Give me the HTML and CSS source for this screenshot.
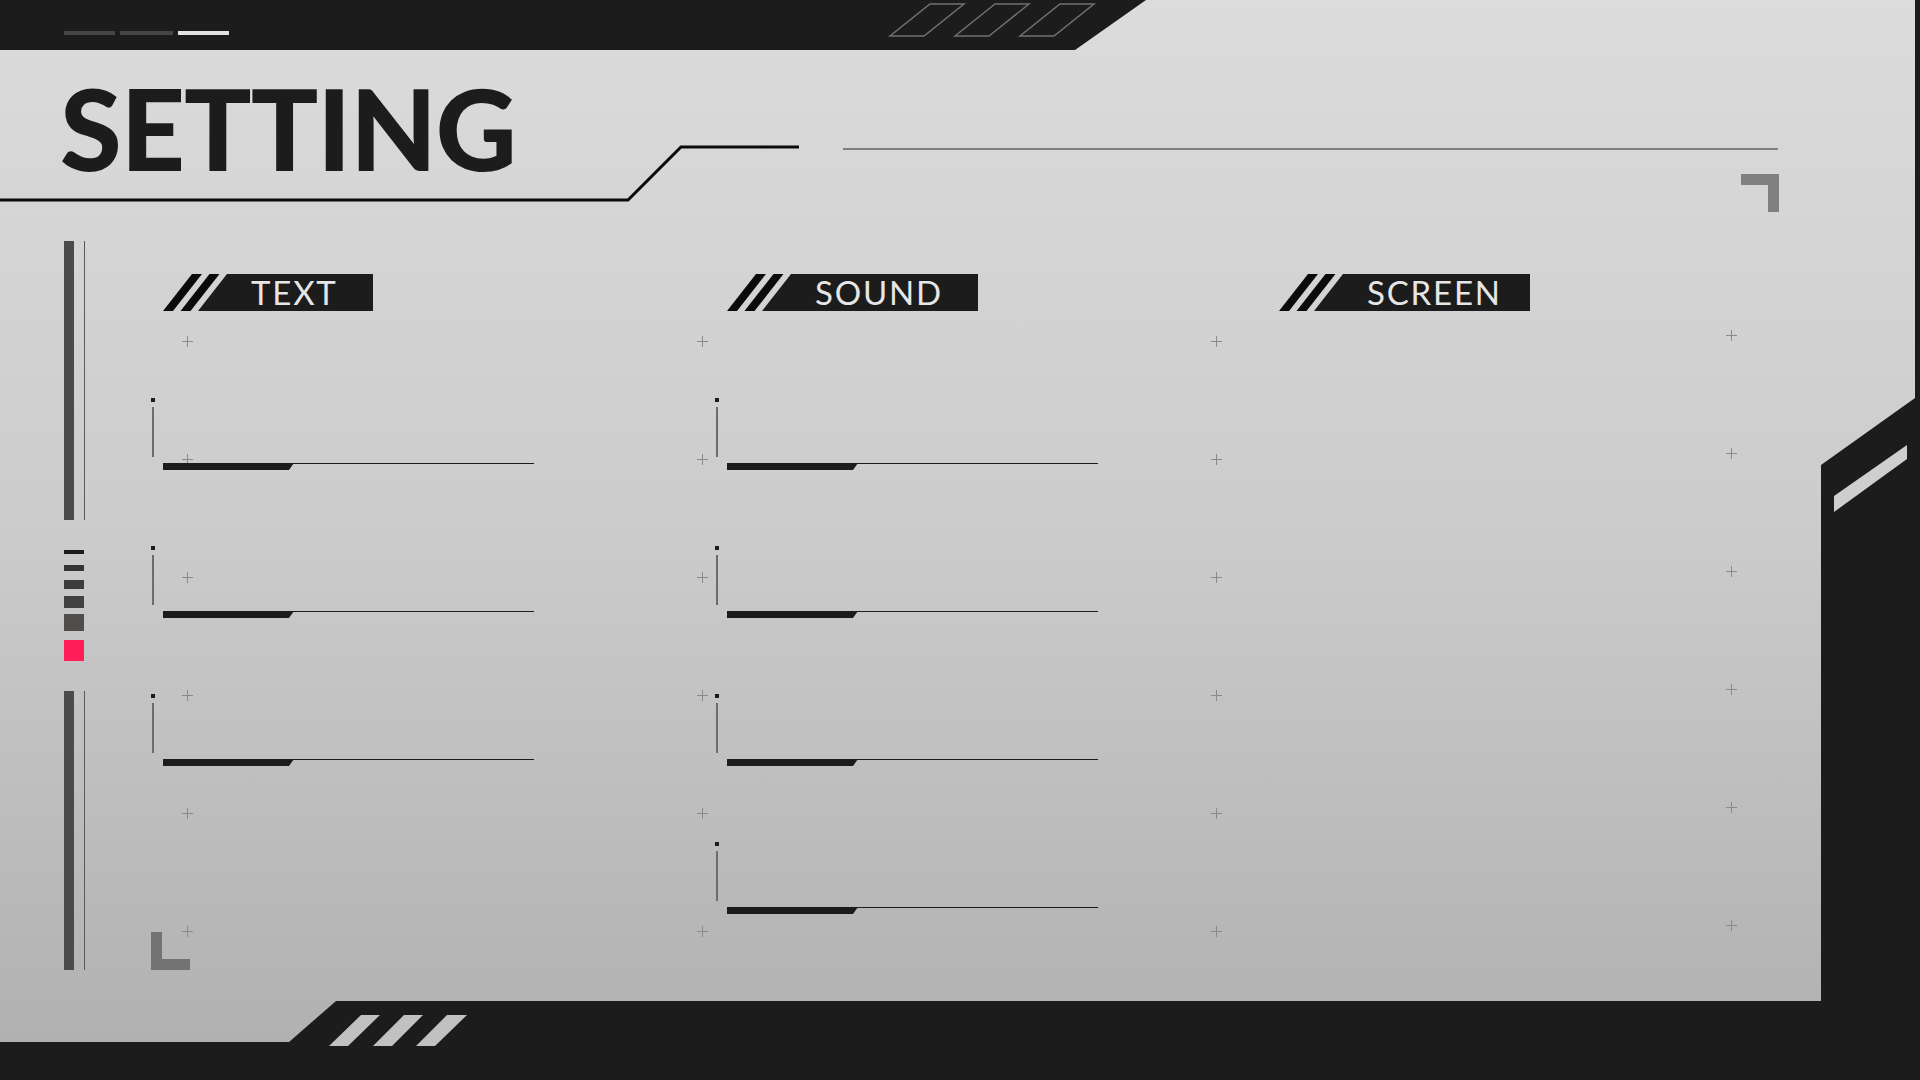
FILE: index.html
```html
<!DOCTYPE html>
<html lang="en">
<head>
<meta charset="utf-8">
<title>Setting</title>
<link rel="stylesheet" href="styles.css">
</head>
<body>
<div class="screen">
  <svg class="frame" width="1920" height="1080" viewBox="0 0 1920 1080" aria-hidden="true">
    <defs>
      <linearGradient id="panelGrad" x1="0" y1="0" x2="0" y2="1">
        <stop offset="0" stop-color="#dddcdd"/>
        <stop offset="0.5" stop-color="#cdcccd"/>
        <stop offset="1" stop-color="#b1b1b1"/>
      </linearGradient>
    </defs>
    <rect width="1920" height="1080" fill="#1c1c1c"/>
    <polygon points="0,50 1075,50 1146,0 1915,0 1915,398 1821,465 1821,1001 336,1001 289,1042 0,1042" fill="url(#panelGrad)"/>
    <g fill="none" stroke="#707070" stroke-width="1.5">
      <polygon points="930,4 964,4 924,36 890,36"/>
      <polygon points="995,4 1029,4 989,36 955,36"/>
      <polygon points="1060,4 1094,4 1054,36 1020,36"/>
    </g>
    <polyline points="0,200 628,200 681,147 799,147" fill="none" stroke="#0b0b0b" stroke-width="3"/>
    <line x1="843" y1="149" x2="1778" y2="149" stroke="#808080" stroke-width="2"/>
    <path d="M1741 174H1779V212H1768V185H1741Z" fill="#808080"/>
    <path d="M151 932H162V959H190V970H151Z" fill="#737373"/>
    <g fill="#c1c1c1">
      <polygon points="329,1046 348,1046 380,1015 361,1015"/>
      <polygon points="373,1046 392,1046 423,1015 404,1015"/>
      <polygon points="416,1046 435,1046 467,1015 447,1015"/>
    </g>
    <polygon points="1834,496 1907,445 1907,459 1834,512" fill="#cfcecf"/>
  </svg>

  <div class="content">
    <div class="topbar">
      <span class="dash dash-a"></span>
      <span class="dash dash-b"></span>
      <span class="dash dash-c"></span>
    </div>

    <header class="header">
      <h1 class="title">SETTING</h1>
    </header>

    <main class="main">
      <aside class="sidebar">
        <div class="vbar"><span class="vbar-thick"></span><span class="vbar-thin"></span></div>
        <div class="stack">
          <span class="step step-1"></span>
          <span class="step step-2"></span>
          <span class="step step-3"></span>
          <span class="step step-4"></span>
          <span class="step step-5"></span>
          <span class="step step-6"></span>
        </div>
        <div class="vbar"><span class="vbar-thick"></span><span class="vbar-thin"></span></div>
      </aside>

      <section class="stage">
        <div class="plus-grid">
          <span class="plus"></span><span class="plus"></span><span class="plus"></span><span class="plus"></span>
          <span class="plus"></span><span class="plus"></span><span class="plus"></span><span class="plus"></span>
          <span class="plus"></span><span class="plus"></span><span class="plus"></span><span class="plus"></span>
          <span class="plus"></span><span class="plus"></span><span class="plus"></span><span class="plus"></span>
          <span class="plus"></span><span class="plus"></span><span class="plus"></span><span class="plus"></span>
          <span class="plus"></span><span class="plus"></span><span class="plus"></span><span class="plus"></span>
        </div>

        <div class="columns">
          <div class="col">
            <div class="tag tag-narrow">
              <svg class="tag-art" viewBox="0 0 210 37" preserveAspectRatio="none" aria-hidden="true">
                <polygon points="0,37 10,37 39,0 29,0" fill="#0b0b0b"/>
                <polygon points="17.5,37 27.5,37 56.5,0 46.5,0" fill="#0b0b0b"/>
                <polygon points="35,37 64,0 210,0 210,37" fill="#1c1c1c"/>
              </svg>
              <span class="tag-label">TEXT</span>
            </div>
            <div class="sliders">
              <div class="slider"><div class="mark"><span class="dot"></span><span class="mline"></span></div><div class="track"><span class="fill"></span></div></div>
              <div class="slider"><div class="mark"><span class="dot"></span><span class="mline"></span></div><div class="track"><span class="fill"></span></div></div>
              <div class="slider"><div class="mark"><span class="dot"></span><span class="mline"></span></div><div class="track"><span class="fill"></span></div></div>
            </div>
          </div>

          <div class="col">
            <div class="tag">
              <svg class="tag-art" viewBox="0 0 251 37" preserveAspectRatio="none" aria-hidden="true">
                <polygon points="0,37 10,37 39,0 29,0" fill="#0b0b0b"/>
                <polygon points="17.5,37 27.5,37 56.5,0 46.5,0" fill="#0b0b0b"/>
                <polygon points="35,37 64,0 251,0 251,37" fill="#1c1c1c"/>
              </svg>
              <span class="tag-label">SOUND</span>
            </div>
            <div class="sliders">
              <div class="slider"><div class="mark"><span class="dot"></span><span class="mline"></span></div><div class="track"><span class="fill"></span></div></div>
              <div class="slider"><div class="mark"><span class="dot"></span><span class="mline"></span></div><div class="track"><span class="fill"></span></div></div>
              <div class="slider"><div class="mark"><span class="dot"></span><span class="mline"></span></div><div class="track"><span class="fill"></span></div></div>
              <div class="slider"><div class="mark"><span class="dot"></span><span class="mline"></span></div><div class="track"><span class="fill"></span></div></div>
            </div>
          </div>

          <div class="col">
            <div class="tag">
              <svg class="tag-art" viewBox="0 0 251 37" preserveAspectRatio="none" aria-hidden="true">
                <polygon points="0,37 10,37 39,0 29,0" fill="#0b0b0b"/>
                <polygon points="17.5,37 27.5,37 56.5,0 46.5,0" fill="#0b0b0b"/>
                <polygon points="35,37 64,0 251,0 251,37" fill="#1c1c1c"/>
              </svg>
              <span class="tag-label">SCREEN</span>
            </div>
          </div>
        </div>
      </section>
    </main>
  </div>
</div>
</body>
</html>
```

FILE: styles.css
```css
* { box-sizing: border-box; }

html, body {
  margin: 0;
  padding: 0;
  background: #1c1c1c;
}

.screen {
  position: relative;
  width: 1920px;
  height: 1080px;
  overflow: hidden;
  font-family: "Lato", "Open Sans", sans-serif;
}

.frame {
  position: absolute;
  left: 0;
  top: 0;
  z-index: 0;
  display: block;
}

.content {
  position: relative;
  z-index: 1;
  height: 1080px;
}

/* top bar */
.topbar {
  height: 50px;
  padding: 31px 0 0 64px;
  display: flex;
  align-items: flex-start;
  gap: 5px;
}
.dash { display: block; height: 4px; }
.dash-a { width: 51px; background: #454545; }
.dash-b { width: 53px; background: #454545; }
.dash-c { width: 51px; background: #e2e2e2; }

/* header */
.header {
  height: 150px;
  padding: 22px 0 0 60px;
}
.title {
  margin: 0;
  font-family: "Lato", sans-serif;
  font-weight: 900;
  font-size: 112px;
  line-height: 1;
  color: #1c1c1c;
  letter-spacing: -1px;
}

/* main */
.main {
  display: flex;
  padding: 41px 0 0 64px;
}

.sidebar {
  width: 21px;
  display: flex;
  flex-direction: column;
}
.vbar {
  height: 279px;
  display: flex;
  justify-content: space-between;
}
.vbar-thick { width: 10px; background: #4d4b4a; }
.vbar-thin { width: 1px; background: #5a5a5a; }

.stack {
  width: 20px;
  margin: 30px 0;
  display: flex;
  flex-direction: column;
}
.step { display: block; width: 20px; }
.step-1 { height: 4px; background: #1c1c1c; }
.step-2 { height: 6px; margin-top: 11px; background: #353535; }
.step-3 { height: 9px; margin-top: 9px; background: #3c3c3c; }
.step-4 { height: 12px; margin-top: 7px; background: #424242; }
.step-5 { height: 17px; margin-top: 6px; background: #4f4d4b; }
.step-6 { height: 21px; margin-top: 9px; background: #ff1e58; }

/* stage with plus grid behind columns */
.stage {
  margin-left: 66px;
  display: grid;
  width: 1670px;
}
.plus-grid,
.columns {
  grid-area: 1 / 1;
}

.plus-grid {
  display: grid;
  grid-template-columns: repeat(4, 514.5px);
  grid-auto-rows: 118px;
  padding: 95px 0 0 31px;
  align-content: start;
}
.plus {
  display: block;
  width: 11px;
  height: 11px;
  background:
    linear-gradient(#8a8a8a, #8a8a8a) center / 11px 1px no-repeat,
    linear-gradient(#8a8a8a, #8a8a8a) center / 1px 11px no-repeat;
}
.plus:nth-child(4n) { margin-top: -6px; }

.columns {
  display: grid;
  grid-template-columns: 564px 552px 1fr;
  padding-top: 33px;
  align-items: start;
}

.col {
  display: flex;
  flex-direction: column;
}

/* tags */
.tag {
  margin-left: 12px;
  width: 251px;
  height: 37px;
  display: grid;
}
.tag-narrow { width: 210px; }
.tag-art,
.tag-label { grid-area: 1 / 1; }
.tag-art {
  width: 100%;
  height: 37px;
  display: block;
}
.tag-label {
  padding-left: 88px;
  font-family: "Lato", sans-serif;
  font-weight: 400;
  font-size: 33px;
  line-height: 37px;
  letter-spacing: 1.8px;
  color: #e6e6e6;
  white-space: nowrap;
}

/* sliders */
.sliders {
  margin-top: 87px;
  display: flex;
  flex-direction: column;
  gap: 76px;
}
.slider {
  display: flex;
  align-items: flex-start;
  height: 72px;
}
.mark {
  width: 4px;
  display: flex;
  flex-direction: column;
  align-items: center;
}
.dot {
  display: block;
  width: 4px;
  height: 4px;
  background: #1c1c1c;
}
.mline {
  display: block;
  width: 2px;
  height: 50px;
  margin-top: 5px;
  background: #6c6c6c;
}
.track {
  margin: 65px 0 0 8px;
  width: 371px;
  height: 7px;
  display: flex;
  background: linear-gradient(#1c1c1c, #1c1c1c) top left / 100% 1px no-repeat;
}
.fill {
  display: block;
  width: 131px;
  height: 7px;
  background: #1c1c1c;
  clip-path: polygon(0 0, 100% 0, calc(100% - 5px) 100%, 0 100%);
}
```
